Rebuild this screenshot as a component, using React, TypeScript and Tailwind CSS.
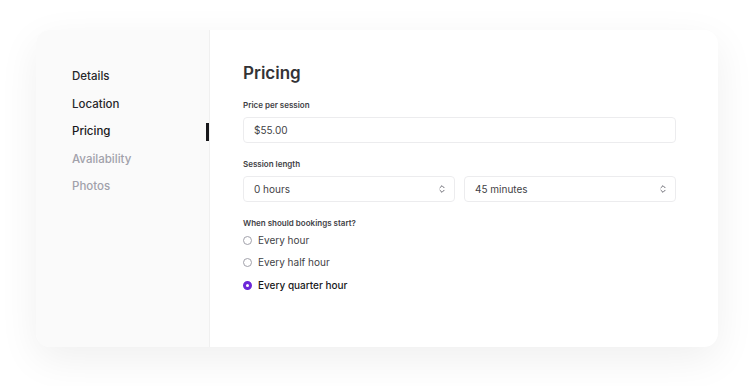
import { ChevronsUpDown } from 'lucide-react';

const navItems = [
  { label: 'Details', enabled: true },
  { label: 'Location', enabled: true },
  { label: 'Pricing', enabled: true, active: true },
  { label: 'Availability', enabled: false },
  { label: 'Photos', enabled: false },
];

const bookingOptions = ['Every hour', 'Every half hour', 'Every quarter hour'];

function SelectBox({ value }: { value: string }) {
  return (
    <div className="flex-1 h-[26px] rounded-[4px] border border-[#ececee] bg-white flex items-center justify-between pl-[10px] pr-[7px]">
      <span className="text-[10px] text-[#3f3f46]">{value}</span>
      <ChevronsUpDown className="w-[10px] h-[10px] text-[#52525b]" strokeWidth={2} />
    </div>
  );
}

export default function App() {
  const selected = 'Every quarter hour';

  return (
    <div
      className="w-[753px] h-[386px] bg-white pt-[30px] pl-[36px]"
      style={{ fontFamily: 'Inter, "Noto Sans", sans-serif' }}
    >
      <div className="w-[682px] h-[317px] flex rounded-[14px] overflow-hidden bg-white shadow-[0_12px_40px_rgba(0,0,0,0.065)]">
        {/* Sidebar */}
        <div className="w-[174px] bg-[#fafafa] border-r border-[#f0f0f0] pt-[38px] pl-[36px] flex flex-col gap-[9.5px]">
          {navItems.map((item) => (
            <div key={item.label} className="h-[18px] flex items-center justify-between">
              <span
                className={
                  'text-[11.5px] font-medium ' +
                  (item.active ? 'text-[#18181b]' : item.enabled ? 'text-[#27272a]' : 'text-[#a1a1aa]')
                }
              >
                {item.label}
              </span>
              {item.active && <span className="w-[3px] h-[18px] bg-[#18181b]" />}
            </div>
          ))}
        </div>

        {/* Content */}
        <div className="flex-1 pt-[31px] pl-[33px] pr-[42px]">
          <h1 className="text-[17px] leading-[24px] font-semibold text-[#333336]">Pricing</h1>

          <p className="mt-[14px] text-[8px] leading-[12px] font-semibold text-[#3f3f46]">Price per session</p>
          <div className="mt-[6px] h-[26px] rounded-[4px] border border-[#ececee] flex items-center pl-[10px]">
            <span className="text-[10px] text-[#3f3f46]">$55.00</span>
          </div>

          <p className="mt-[15px] text-[8px] leading-[12px] font-semibold text-[#3f3f46]">Session length</p>
          <div className="mt-[6px] flex gap-[9px]">
            <SelectBox value="0 hours" />
            <SelectBox value="45 minutes" />
          </div>

          <p className="mt-[15px] text-[8px] leading-[12px] font-semibold text-[#3f3f46]">When should bookings start?</p>
          <div className="mt-[3px] flex flex-col gap-[6.5px]">
            {bookingOptions.map((opt) => {
              const isOn = opt === selected;
              return (
                <label key={opt} className="h-[16px] flex items-center gap-[6px]">
                  {isOn ? (
                    <span className="w-[9px] h-[9px] rounded-full border-[3px] border-[#6d28d9] bg-white" />
                  ) : (
                    <span className="w-[9px] h-[9px] rounded-full border border-[#a1a1aa] bg-white" />
                  )}
                  <span className={'text-[10px] ' + (isOn ? 'font-medium text-[#18181b]' : 'text-[#3f3f46]')}>
                    {opt}
                  </span>
                </label>
              );
            })}
          </div>
        </div>
      </div>
    </div>
  );
}
